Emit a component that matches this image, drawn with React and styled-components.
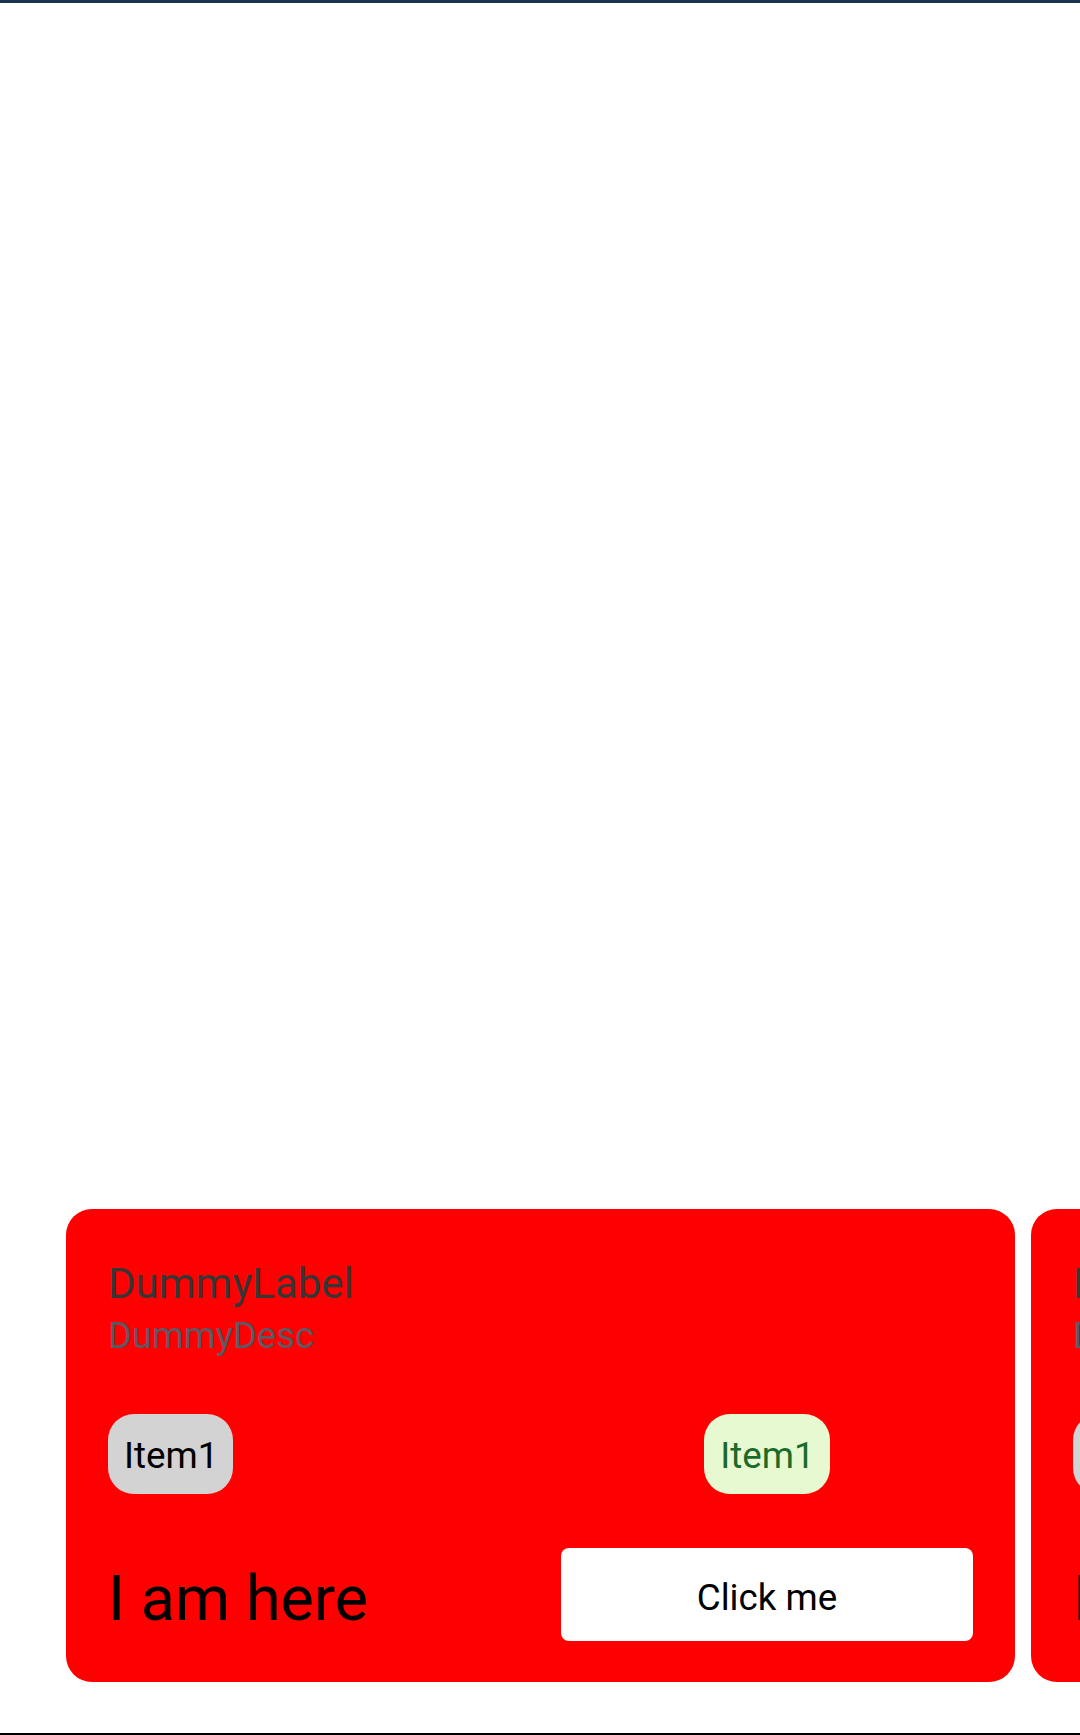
import React from "react";
import styled, { createGlobalStyle } from "styled-components";

const GlobalStyle = createGlobalStyle`
    html, body {
        margin: 0;
        padding: 0;
        background: #ffffff;
        font-family: Roboto, "Noto Sans", sans-serif;
    }
`

const Screen = styled.div`
    display: flex;
    flex-direction: column;
    width: 1080px;
    height: 1735px;
    overflow: hidden;
    background: #ffffff;
`

const StatusStrip = styled.div`
    height: 3px;
    background-color: #1c3350;
    flex-shrink: 0;
`

const Spacer = styled.div`
    flex: 1;
`

const Carousel = styled.div`
    display: flex;
    gap: 16px;
    padding-left: 66px;
    margin-bottom: 51px;
    overflow: hidden;
`

const Card = styled.div`
    flex: 0 0 949px;
    box-sizing: border-box;
    display: flex;
    flex-direction: column;
    background-color: #ff0000;
    border-radius: 26px;
    padding: 50px 42px 41px 42px;
`

const Label = styled.div`
    font-size: 42px;
    line-height: 49px;
    color: #363636;
`

const Desc = styled.div`
    margin-top: 6px;
    font-size: 36.4px;
    line-height: 43px;
    color: #5a5a64;
`

const ChipRow = styled.div`
    display: grid;
    grid-template-columns: 1fr 1fr;
    column-gap: 41px;
    margin-top: 57px;
`

const Chip = styled.span`
    justify-self: ${p => (p.$center ? "center" : "start")};
    height: 80px;
    box-sizing: border-box;
    padding: 20px 15px 17px 16px;
    border-radius: 26px;
    font-size: 36.75px;
    line-height: 43px;
    background-color: ${p => (p.$tone === "green" ? "#e7f9d1" : "#d3d3d3")};
    color: ${p => (p.$tone === "green" ? "#1b6a2a" : "#000000")};
`

const BottomRow = styled.div`
    display: grid;
    grid-template-columns: 1fr 1fr;
    column-gap: 41px;
    align-items: center;
    margin-top: 54px;
`

const Here = styled.div`
    font-size: 63px;
    line-height: 74px;
    padding-top: 8px;
    color: #000000;
`

const ClickButton = styled.button`
    height: 93px;
    box-sizing: border-box;
    padding: 5px 0 0 0;
    border: none;
    border-radius: 8px;
    background-color: #ffffff;
    font-family: Roboto, "Noto Sans", sans-serif;
    font-size: 36.75px;
    line-height: 43px;
    color: #000000;
`

const BottomLine = styled.div`
    height: 2px;
    background-color: #000000;
    flex-shrink: 0;
`

function DummyCard() {
    return (
        <Card>
            <Label>DummyLabel</Label>
            <Desc>DummyDesc</Desc>
            <ChipRow>
                <Chip>Item1</Chip>
                <Chip $tone="green" $center>Item1</Chip>
            </ChipRow>
            <BottomRow>
                <Here>I am here</Here>
                <ClickButton>Click me</ClickButton>
            </BottomRow>
        </Card>
    )
}

export default function App() {
    return (
        <Screen>
            <GlobalStyle />
            <StatusStrip />
            <Spacer />
            <Carousel>
                <DummyCard />
                <DummyCard />
            </Carousel>
            <BottomLine />
        </Screen>
    )
}
